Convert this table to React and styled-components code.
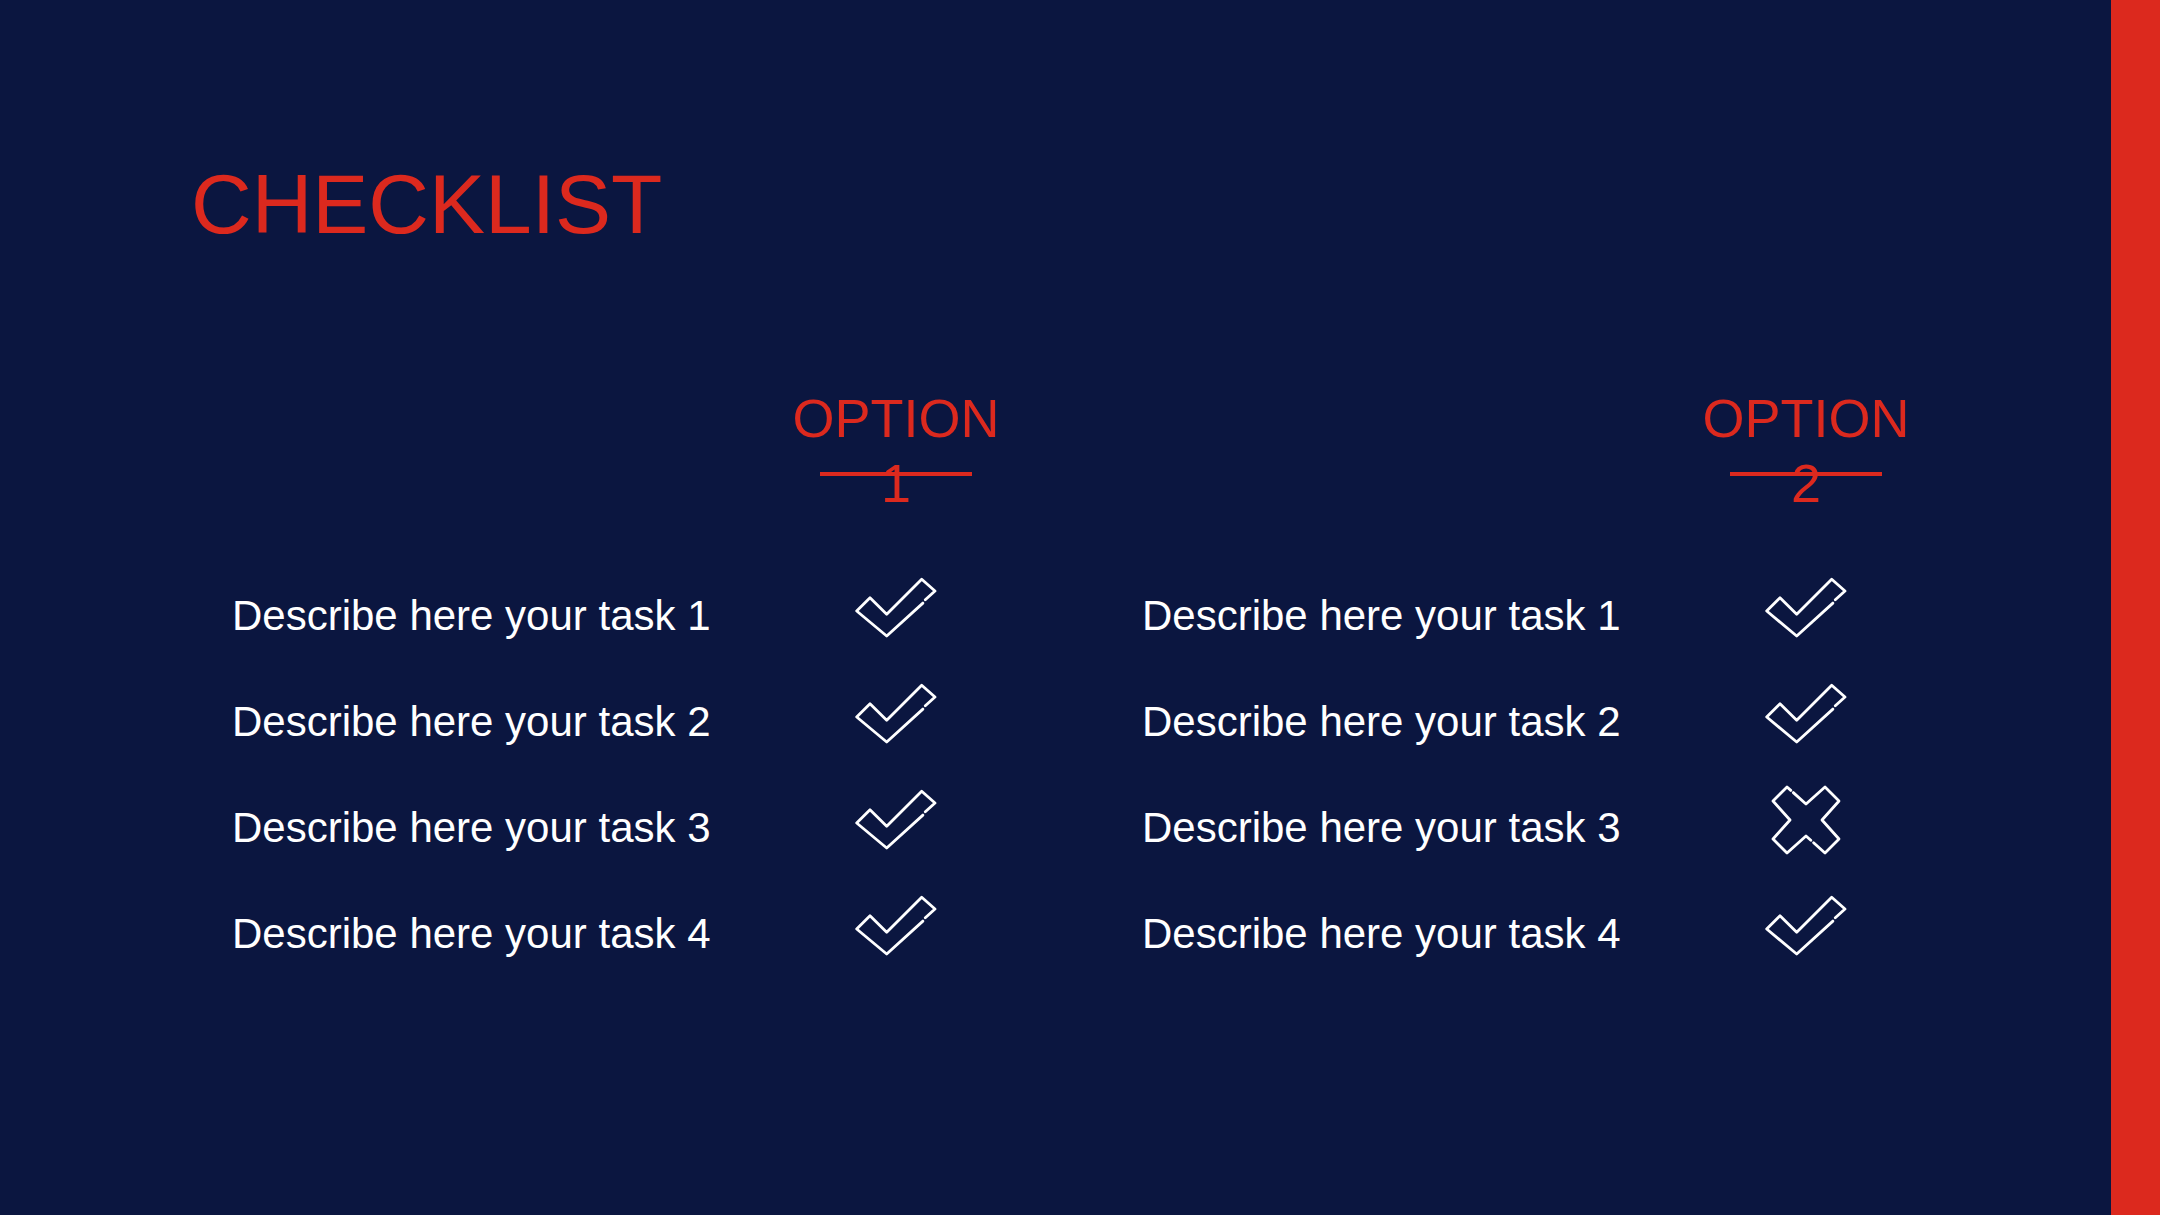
import React from 'react';
import styled, { createGlobalStyle } from 'styled-components';

var RED = '#dc291e';
var NAVY = '#0b1640';

var Global = createGlobalStyle`
  html, body {
    margin: 0;
    padding: 0;
    background: ${NAVY};
  }
  body {
    font-family: "Liberation Sans", Arial, sans-serif;
  }
`

var Page = styled.div`
  display: flex;
  flex-direction: row;
  width: 2160px;
  height: 1215px;
  background: ${NAVY};
  overflow: hidden;
`

var Main = styled.div`
  flex: 1;
  padding: 162px 0 0 191px;
`

var Accent = styled.div`
  width: 49px;
  background: ${RED};
`

var Title = styled.h1`
  margin: 0;
  font-weight: 400;
  font-size: 84px;
  line-height: 85px;
  color: ${RED};
`

var Board = styled.div`
  display: flex;
  flex-direction: row;
  gap: 146px;
  margin: 139px 0 0 41px;
`

var Option = styled.div`
  display: grid;
  grid-template-columns: 564px 200px;
  grid-template-rows: 177px;
  grid-auto-rows: 106px;
`

var Header = styled.div`
  grid-column: 2;
  grid-row: 1;
  align-self: start;
  position: relative;
  display: flex;
  flex-direction: column;
  align-items: center;
  height: 130px;
  font-size: 54px;
  line-height: 65px;
  color: ${RED};

  &::after {
    content: '';
    position: absolute;
    top: 86px;
    left: 50%;
    width: 152px;
    height: 4px;
    margin-left: -76px;
    background: ${RED};
  }
`

var Task = styled.div`
  grid-column: 1;
  grid-row: ${props => props.$row};
  font-size: 42px;
  line-height: 106px;
  color: #ffffff;
  white-space: nowrap;
`

var Mark = styled.div`
  grid-column: 2;
  grid-row: ${props => props.$row};
  display: flex;
  align-items: center;
  justify-content: center;

  svg {
    margin-bottom: 16px;
  }
`

var Check = () => (
  <svg width="82" height="62" viewBox="-1 -1 82 62" fill="none" stroke="#fff" strokeWidth="2.8" strokeLinejoin="round" strokeLinecap="round">
    <polyline points="66.9,25.1 30.7,58 0.7,33 14,19.7 30.7,36.3 65.7,1.3 79,13 69.3,21.8" />
  </svg>
)

var Cross = () => (
  <svg width="74" height="74" viewBox="-1 -1 74 74" fill="none" stroke="#fff" strokeWidth="2.8" strokeLinejoin="round" strokeLinecap="round">
    <polyline points="23.3,8.6 36,20 55,3 69,17 52,36 69,55 55,69 43.6,58.8" />
    <polyline points="40.8,56.3 36,52 17,69 3,55 20,36 3,17 17,3 20.8,6.4" />
  </svg>
)

var options = [
  { num: '1', marks: [true, true, true, true] },
  { num: '2', marks: [true, true, false, true] },
];

var App = () => {
  return (
    <Page>
      <Global />
      <Main>
        <Title>CHECKLIST</Title>
        <Board>
          {options.map((opt) => (
            <Option key={opt.num}>
              <Header>
                <span>OPTION</span>
                <span>{opt.num}</span>
              </Header>
              {opt.marks.map((ok, i) => (
                <React.Fragment key={i}>
                  <Task $row={i + 2}>Describe here your task {i + 1}</Task>
                  <Mark $row={i + 2}>{ok ? <Check /> : <Cross />}</Mark>
                </React.Fragment>
              ))}
            </Option>
          ))}
        </Board>
      </Main>
      <Accent />
    </Page>
  );
};

export default App;
